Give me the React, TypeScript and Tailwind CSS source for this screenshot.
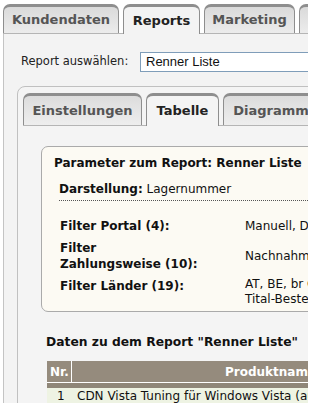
import React from 'react';

const font = { fontFamily: '"DejaVu Sans", Verdana, sans-serif' };

const OuterTab: React.FC<{ label: string; active?: boolean; width: string }> = ({ label, active, width }) => (
    <div
        className={`${width} shrink-0 rounded-t-[7px] border-t-[3px] border-x border-[#8e8e8e] flex items-center justify-center text-[13px] font-bold whitespace-nowrap ${
            active ? 'bg-[#f3f3f3] text-[#222] h-[30px] -mb-px' : 'h-[29px] bg-gradient-to-b from-[#dadada] to-[#ececec] text-[#555]'
        }`}
    >
        {label}
    </div>
);

const InnerTab: React.FC<{ label: string; active?: boolean; width: string }> = ({ label, active, width }) => (
    <div
        className={`${width} shrink-0 rounded-t-[7px] border-t-[3px] border-x border-[#8e8e8e] flex items-center justify-center text-[13px] font-bold whitespace-nowrap ${
            active ? 'bg-[#f4f4f4] text-[#222] h-[33px] -mb-px' : 'h-[32px] bg-gradient-to-b from-[#dcdcdc] to-[#eeeeee] text-[#555]'
        }`}
    >
        {label}
    </div>
);

export default function App() {
    return (
        <div className="w-[314px] h-[407px] bg-white overflow-hidden" style={font}>
            <div className="w-[308px] h-[403px] overflow-hidden pt-[4px] pl-[3px]">
                {/* top tabs */}
                <div className="flex items-end gap-[4px] w-[500px] h-[30px] border-b border-[#b5b5b5]">
                    <OuterTab label="Kundendaten" width="w-[116px]" />
                    <OuterTab label="Reports" width="w-[77px]" active />
                    <OuterTab label="Marketing" width="w-[91px]" />
                    <OuterTab label="Statistik" width="w-[90px]" />
                </div>

                <div className="bg-[#f3f3f3] border-l border-[#c4c4c4] h-[400px] pt-[18px] pl-[13px]">
                    <div className="flex items-center h-[20px] w-[500px]">
                        <span className="text-[11.5px] text-[#222] w-[119px] ml-[4px] shrink-0 whitespace-nowrap">Report auswählen:</span>
                        <div className="w-[300px] shrink-0 h-[20px] bg-white border border-[#7f9db9] border-r-0 flex items-center pl-[5px] text-[13px] text-[#111]" style={{ fontFamily: '"Liberation Sans", Arial, sans-serif' }}>
                            Renner Liste
                        </div>
                    </div>

                    {/* inner tab container */}
                    <div className="mt-[14px] w-[500px] border border-[#c0c0c0] rounded-tl-[8px] bg-[#f4f4f4] pt-[6px] pl-[5px]">
                        <div className="flex items-end gap-[4px] h-[33px] border-b border-[#b5b5b5]">
                            <InnerTab label="Einstellungen" width="w-[119px]" />
                            <InnerTab label="Tabelle" width="w-[73px]" active />
                            <InnerTab label="Diagramm" width="w-[96px]" />
                        </div>

                        <div className="pl-[18px] pt-[20px] pb-[20px]">
                            {/* parameter box */}
                            <div className="w-[420px] bg-[#fcfaf3] border border-[#aaa] rounded-[7px] pl-[12px] pt-[8px] pb-[4px] text-[12px] text-[#111] leading-[16px]">
                                <div className="font-bold whitespace-nowrap">Parameter zum Report: Renner Liste</div>
                                <div className="mt-[10px] ml-[5px] border-b border-dotted border-[#555] pb-[3px] whitespace-nowrap">
                                    <span className="font-bold">Darstellung:</span> Lagernummer
                                </div>
                                <div className="ml-[6px] mt-[17px]">
                                    <div className="flex items-center">
                                        <span className="w-[185px] shrink-0 font-bold">Filter Portal (4):</span>
                                        <span className="whitespace-nowrap">Manuell, DHL</span>
                                    </div>
                                    <div className="flex items-center mt-[6px]">
                                        <span className="w-[185px] shrink-0 font-bold">Filter<br />Zahlungsweise (10):</span>
                                        <span className="whitespace-nowrap">Nachnahme</span>
                                    </div>
                                    <div className="flex items-start mt-[6px]">
                                        <span className="w-[185px] shrink-0 font-bold">Filter Länder (19):</span>
                                        <span className="leading-[15px] -mt-px whitespace-nowrap">AT, BE, br CH<br />Tital-Besteller</span>
                                    </div>
                                </div>
                            </div>

                            <div className="mt-[22px] ml-[5px] font-bold text-[12.3px] leading-[16px] text-[#111] whitespace-nowrap">Daten zu dem Report "Renner Liste"</div>

                            {/* table */}
                            <div className="mt-[11px] ml-[6px] w-[420px] text-[12px]">
                                <div className="flex h-[21px] bg-[#958b7d] text-white font-bold items-center">
                                    <div className="w-[25px] border-r border-white h-full flex items-center pl-[3px]">Nr.</div>
                                    <div className="pl-[153px]">Produktname</div>
                                </div>
                                <div className="h-[1px] bg-white" />
                                <div className="h-[5px] bg-[#8f8678]" />
                                <div className="flex h-[15px] bg-[#eef3e3] items-center text-[#111] whitespace-nowrap">
                                    <div className="w-[30px] pl-[10px]">1</div>
                                    <div>CDN Vista Tuning für Windows Vista (auf DVD)</div>
                                </div>
                            </div>
                        </div>
                    </div>
                </div>
            </div>
        </div>
    );
}
